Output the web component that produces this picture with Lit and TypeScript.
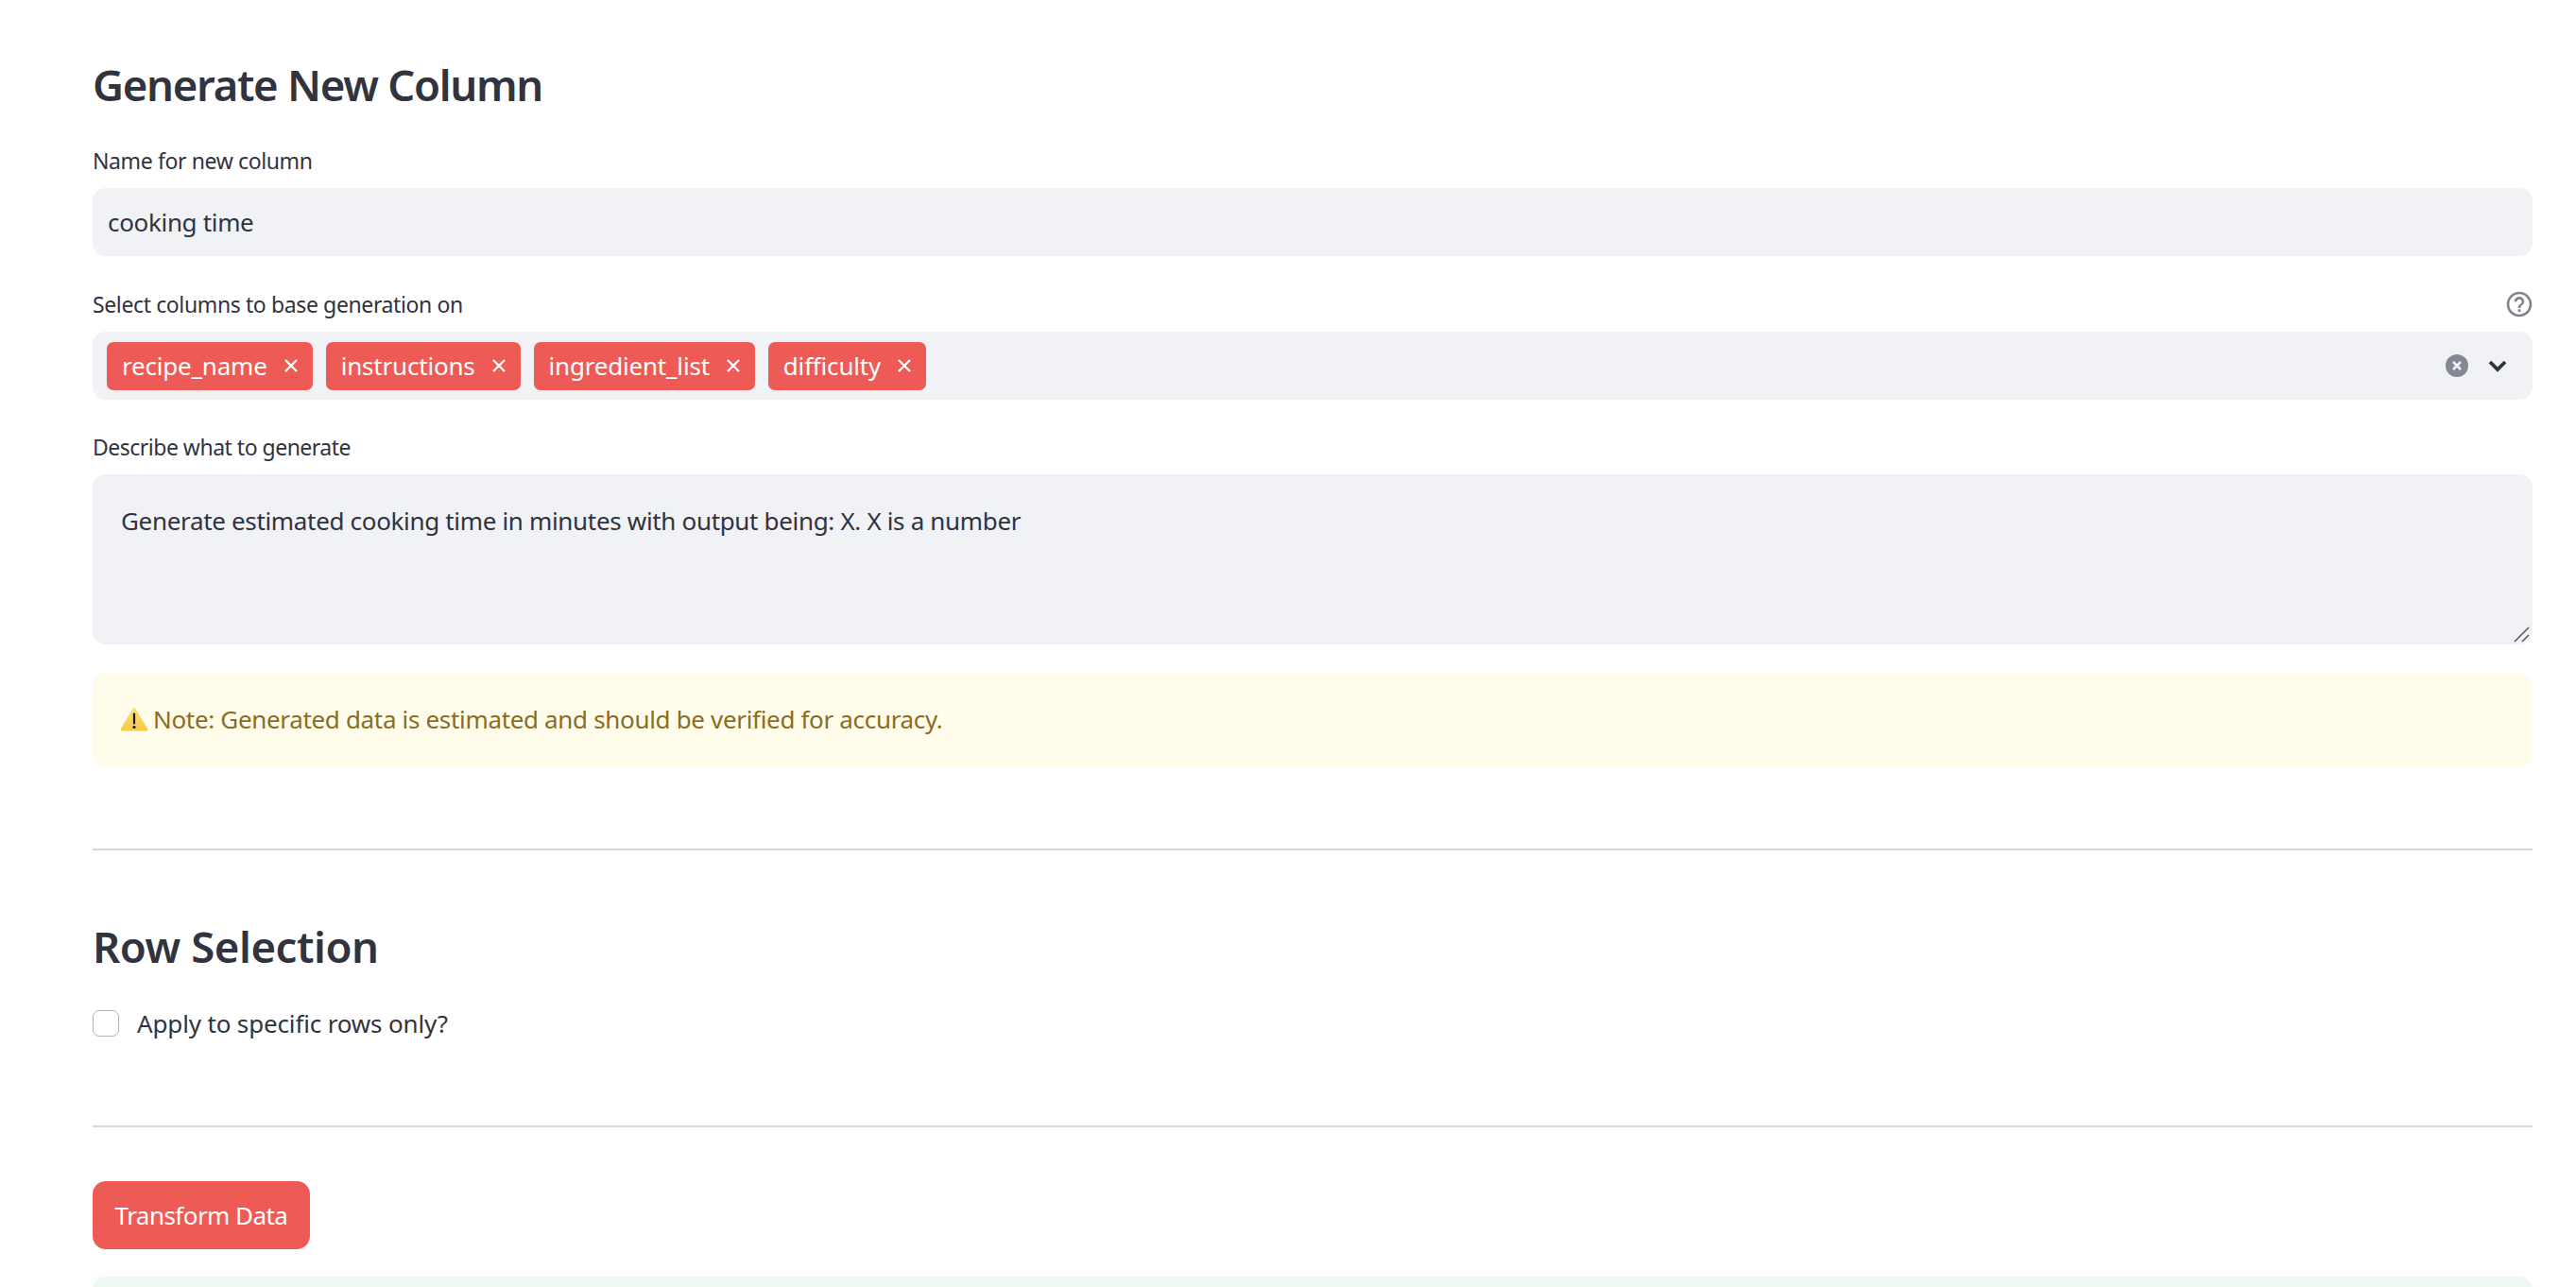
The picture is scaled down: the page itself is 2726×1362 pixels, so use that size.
import { LitElement, html, css, svg } from "lit";
import { customElement } from "lit/decorators.js";

const closeX = svg`<path d="M1 1 L13 13 M13 1 L1 13" fill="none" stroke="#fff" stroke-width="2.3" stroke-linecap="butt"/>`;

@customElement("app-root")
export class AppRoot extends LitElement {
  static styles = css`
    :host {
      display: block;
      height: 1362px;
      overflow: hidden;
      background: #fff;
      color: #31333f;
      font-family: "Noto Sans", "Open Sans", sans-serif;
    }
    main {
      display: flex;
      flex-direction: column;
      padding: 60px 46px 0 98px;
    }
    h2 {
      margin: 0;
      height: 60px;
      line-height: 58px;
      font-size: 45.5px;
      font-weight: 600;
      letter-spacing: -1.3px;
      color: #31333f;
    }
    .label {
      display: flex;
      align-items: center;
      justify-content: space-between;
      height: 28px;
      font-size: 23px;
      letter-spacing: -0.38px;
      margin-bottom: 15px;
    }
    .control {
      display: flex;
      align-items: center;
      box-sizing: border-box;
      width: 100%;
      height: 72px;
      border: none;
      outline: none;
      margin: 0;
      border-radius: 14px;
      background: #f0f2f6;
      color: #31333f;
      font-family: inherit;
      font-size: 26px;
      letter-spacing: -0.33px;
    }
    input.control { padding: 0 16px; }
    .first-label { margin-top: 36px; }
    .second-label { margin-top: 37px; margin-bottom: 15px; }
    .third-label { margin-top: 36px; letter-spacing: -0.5px; }
    .select { padding: 0 16px 0 15px; }
    .tags { display: flex; gap: 14px; flex: 1; }
    .tag {
      display: flex;
      align-items: center;
      height: 51px;
      padding: 0 16px;
      border-radius: 7px;
      background: #ee5b56;
      color: #fff;
      letter-spacing: -0.2px;
    }
    .tag svg { width: 14px; height: 14px; margin-left: 18px; }
    .clear { width: 24px; height: 24px; margin-right: 21px; }
    .chevron { width: 20px; height: 14px; margin-right: 11px; }
    .help { width: 32px; height: 32px; margin-right: -2px; }
    .area { position: relative; }
    textarea.control {
      display: block;
      height: 180px;
      padding: 29px 30px;
      line-height: 40px;
      resize: none;
    }
    .grip {
      position: absolute;
      right: 2px;
      bottom: 2px;
      width: 18px;
      height: 18px;
    }
    .alert {
      display: flex;
      align-items: center;
      box-sizing: border-box;
      height: 100px;
      margin-top: 30px;
      padding: 0 29px 2px;
      border-radius: 14px;
      background: #fffcec;
      color: #8c6c20;
      font-size: 26px;
      letter-spacing: -0.33px;
    }
    .alert svg { width: 30px; height: 26px; margin-right: 5px; }
    .alert.ok { margin-top: 29px; background: #edf8f0; }
    hr {
      width: 100%;
      height: 2px;
      margin: 0;
      border: none;
      background: #d8d8db;
    }
    .hr1 { margin-top: 86px; }
    .hr2 { margin-top: 94px; }
    .row-head { margin-top: 72px; margin-bottom: 1px; letter-spacing: -0.45px; }
    .check {
      display: flex;
      align-items: center;
      height: 28px;
      margin-top: 36px;
      font-size: 26px;
      letter-spacing: -0.15px;
    }
    .box {
      box-sizing: border-box;
      width: 28px;
      height: 28px;
      margin-right: 19px;
      border: 1.5px solid #b4b5bb;
      border-radius: 7px;
      background: #fff;
    }
    button {
      align-self: flex-start;
      box-sizing: border-box;
      width: 230px;
      height: 72px;
      margin-top: 57px;
      padding: 0;
      border: none;
      border-radius: 14px;
      background: #ee5b56;
      color: #fff;
      font-family: inherit;
      font-size: 26px;
      letter-spacing: -0.55px;
    }
  `;

  private tag(name: string) {
    return html`<span class="tag">${name}<svg viewBox="0 0 14 14">${closeX}</svg></span>`;
  }

  render() {
    return html`
      <main>
        <h2>Generate New Column</h2>
        <div class="label first-label">Name for new column</div>
        <input class="control" .value=${"cooking time"} readonly />
        <div class="label second-label">
          <span>Select columns to base generation on</span>
          <svg class="help" viewBox="0 0 24 24" fill="#83848b">
            <path d="M11 18h2v-2h-2v2zm1-16C6.48 2 2 6.48 2 12s4.48 10 10 10 10-4.48 10-10S17.52 2 12 2zm0 18c-4.41 0-8-3.59-8-8s3.59-8 8-8 8 3.59 8 8-3.59 8-8 8zm0-14c-2.21 0-4 1.79-4 4h2c0-1.1.9-2 2-2s2 .9 2 2c0 2-3 1.75-3 5h2c0-2.25 3-2.5 3-5 0-2.21-1.79-4-4-4z"/>
          </svg>
        </div>
        <div class="control select">
          <div class="tags">
            ${["recipe_name", "instructions", "ingredient_list", "difficulty"].map((t) => this.tag(t))}
          </div>
          <svg class="clear" viewBox="0 0 24 24">
            <circle cx="12" cy="12" r="12" fill="#848794"/>
            <path d="M8 8 L16 16 M16 8 L8 16" stroke="#f0f2f6" stroke-width="2.6" fill="none"/>
          </svg>
          <svg class="chevron" viewBox="0 0 20 14">
            <path d="M2 3 L10 11 L18 3" stroke="#31333f" stroke-width="3.8" fill="none"/>
          </svg>
        </div>
        <div class="label third-label">Describe what to generate</div>
        <div class="area">
          <textarea class="control" readonly .value=${"Generate estimated cooking time in minutes with output being: X. X is a number"}></textarea>
          <svg class="grip" viewBox="0 0 18 18">
            <path d="M1 17 L16 2 M9 17 L16 10" stroke="#55565c" stroke-width="1.5" fill="none"/>
          </svg>
        </div>
        <div class="alert">
          <svg viewBox="0 0 30 26">
            <defs>
              <linearGradient id="warn" x1="0" y1="0" x2="0" y2="1">
                <stop offset="0" stop-color="#fbdf7a"/>
                <stop offset="1" stop-color="#f7c948"/>
              </linearGradient>
            </defs>
            <path d="M15 1 Q16 1 16.6 2.2 L29 23 Q30 25.5 27.5 25.5 L2.5 25.5 Q0 25.5 1 23 L13.4 2.2 Q14 1 15 1 Z" fill="url(#warn)"/>
            <path d="M15 7.5 L15 17.5" stroke="#1a1a1a" stroke-width="2.2" stroke-linecap="round"/>
            <circle cx="15" cy="21.5" r="1.6" fill="#1a1a1a"/>
          </svg>
          <span>Note: Generated data is estimated and should be verified for accuracy.</span>
        </div>
        <hr class="hr1" />
        <h2 class="row-head">Row Selection</h2>
        <div class="check"><span class="box"></span><span>Apply to specific rows only?</span></div>
        <hr class="hr2" />
        <button>Transform Data</button>
        <div class="alert ok"></div>
      </main>
    `;
  }
}
